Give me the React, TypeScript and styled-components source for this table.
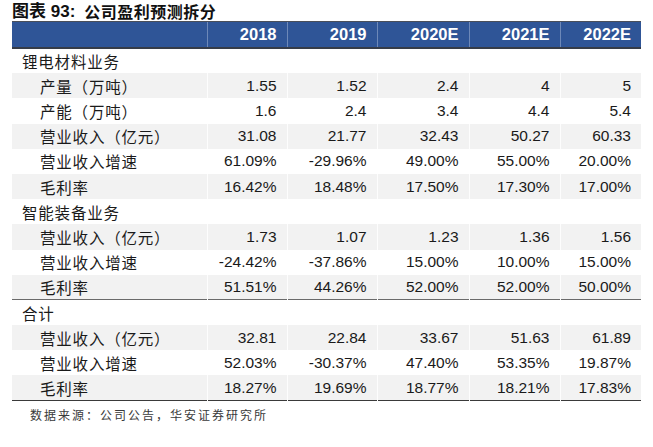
import styled, { createGlobalStyle } from "styled-components";

const GlobalStyle = createGlobalStyle`
  html, body {
    margin: 0;
    padding: 0;
    background: #ffffff;
  }
`;

type Row = {
  label: string;
  section?: boolean;
  values?: string[];
  divider?: boolean;
};

const years = ["2018", "2019", "2020E", "2021E", "2022E"];
const widths = [195, 80, 90, 92, 91, 81];

const rows: Row[] = [
  { label: "锂电材料业务", section: true },
  { label: "产量（万吨）", values: ["1.55", "1.52", "2.4", "4", "5"] },
  { label: "产能（万吨）", values: ["1.6", "2.4", "3.4", "4.4", "5.4"] },
  { label: "营业收入（亿元）", values: ["31.08", "21.77", "32.43", "50.27", "60.33"] },
  { label: "营业收入增速", values: ["61.09%", "-29.96%", "49.00%", "55.00%", "20.00%"] },
  { label: "毛利率", values: ["16.42%", "18.48%", "17.50%", "17.30%", "17.00%"] },
  { label: "智能装备业务", section: true },
  { label: "营业收入（亿元）", values: ["1.73", "1.07", "1.23", "1.36", "1.56"] },
  { label: "营业收入增速", values: ["-24.42%", "-37.86%", "15.00%", "10.00%", "15.00%"] },
  { label: "毛利率", values: ["51.51%", "44.26%", "52.00%", "52.00%", "50.00%"] },
  { label: "合计", section: true, divider: true },
  { label: "营业收入（亿元）", values: ["32.81", "22.84", "33.67", "51.63", "61.89"] },
  { label: "营业收入增速", values: ["52.03%", "-30.37%", "47.40%", "53.35%", "19.87%"] },
  { label: "毛利率", values: ["18.27%", "19.69%", "18.77%", "18.21%", "17.83%"] },
];

const App = () => {
  let shade = false;
  return (
    <>
      <GlobalStyle />
      <Page>
        <Title>
          <TitleNum>图表 93:</TitleNum>
          <span>公司盈利预测拆分</span>
        </Title>
        <Table>
          <colgroup>
            {widths.map((w, i) => (
              <col key={i} style={{ width: w }} />
            ))}
          </colgroup>
          <thead>
            <tr>
              <HeadCell />
              {years.map((y) => (
                <HeadCell key={y}>{y}</HeadCell>
              ))}
            </tr>
          </thead>
          <tbody>
            {rows.map((row, i) => {
              if (row.section) shade = false;
              else shade = !shade;
              return (
                <BodyRow key={i} $shaded={!row.section && shade} $divider={!!row.divider}>
                  <LabelCell $section={!!row.section}>{row.label}</LabelCell>
                  {(row.values ?? ["", "", "", "", ""]).map((v, j) => (
                    <NumCell key={j}>{v}</NumCell>
                  ))}
                </BodyRow>
              );
            })}
          </tbody>
        </Table>
        <Source>数据来源：公司公告，华安证券研究所</Source>
      </Page>
    </>
  );
};

const Page = styled.div`
  width: 653px;
  height: 447px;
  padding: 2px 12px 0 12px;
  box-sizing: border-box;
  background: #ffffff;
`;

const Title = styled.div`
  display: flex;
  gap: 9px;
  height: 19px;
  line-height: 19px;
  font-family: "Noto Sans CJK SC", "Liberation Sans", sans-serif;
  font-size: 16px;
  font-weight: 700;
  letter-spacing: 0.5px;
  color: #111;
`;

const TitleNum = styled.span`
  font-family: "Liberation Sans", "Noto Sans CJK SC", sans-serif;
  font-size: 17px;
  letter-spacing: 0;
`;

const Table = styled.table`
  width: 629px;
  border-collapse: collapse;
  table-layout: fixed;
  border-bottom: 1.5px solid #3a3a3a;
`;

const HeadCell = styled.th`
  height: 25px;
  padding: 0 10px 0 0;
  background: #2f5597;
  color: #ffffff;
  text-align: right;
  font-family: "Liberation Sans", Arial, sans-serif;
  font-size: 16.5px;
  font-weight: 700;
  border-top: 1px solid #4a4f5a;
  border-bottom: 2px solid #363c48;
  border-left: 1px solid #6d88b8;
  &:first-child {
    border-left: none;
  }
`;

const BodyRow = styled.tr<{ $shaded: boolean; $divider: boolean }>`
  height: 25.2px;
  background: ${({ $shaded }) => ($shaded ? "#f2f2f2" : "#ffffff")};
  border-top: ${({ $divider }) => ($divider ? "1.5px solid #6a6a6a" : "none")};
`;

const LabelCell = styled.td<{ $section: boolean }>`
  padding: 0 0 0 ${({ $section }) => ($section ? "10px" : "28px")};
  font-family: "Noto Sans CJK SC", sans-serif;
  font-size: 15.5px;
  letter-spacing: 0.8px;
  color: #1a1a1a;
  white-space: nowrap;
`;

const NumCell = styled.td`
  padding: 0 10px 0 0;
  text-align: right;
  font-family: "Liberation Sans", Arial, sans-serif;
  font-size: 15.5px;
  color: #1a1a1a;
  border-left: 1px solid rgba(255, 255, 255, 0.8);
`;

const Source = styled.div`
  padding: 5px 0 0 18px;
  font-family: "Noto Sans CJK SC", sans-serif;
  font-size: 12px;
  letter-spacing: 2px;
  color: #3a3a3a;
`;

export default App;
